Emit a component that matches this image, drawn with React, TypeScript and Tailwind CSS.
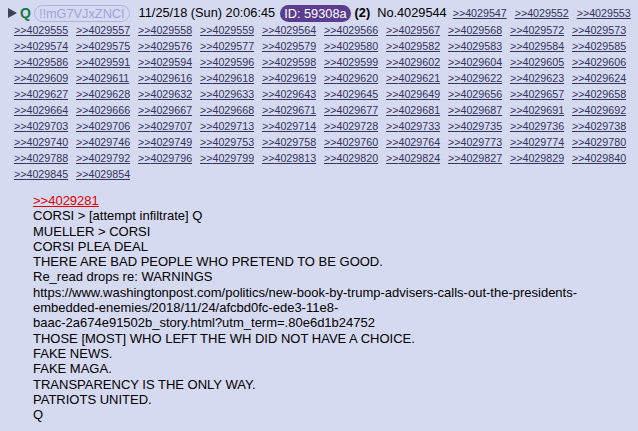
const replies = [
  4029547, 4029552, 4029553,
  4029555, 4029557, 4029558, 4029559, 4029564, 4029566, 4029567, 4029568, 4029572, 4029573,
  4029574, 4029575, 4029576, 4029577, 4029579, 4029580, 4029582, 4029583, 4029584, 4029585,
  4029586, 4029591, 4029594, 4029596, 4029598, 4029599, 4029602, 4029604, 4029605, 4029606,
  4029609, 4029611, 4029616, 4029618, 4029619, 4029620, 4029621, 4029622, 4029623, 4029624,
  4029627, 4029628, 4029632, 4029633, 4029643, 4029645, 4029649, 4029656, 4029657, 4029658,
  4029664, 4029666, 4029667, 4029668, 4029671, 4029677, 4029681, 4029687, 4029691, 4029692,
  4029703, 4029706, 4029707, 4029713, 4029714, 4029728, 4029733, 4029735, 4029736, 4029738,
  4029740, 4029746, 4029749, 4029753, 4029758, 4029760, 4029764, 4029773, 4029774, 4029780,
  4029788, 4029792, 4029796, 4029799, 4029813, 4029820, 4029824, 4029827, 4029829, 4029840,
  4029845, 4029854,
];

const body = [
  'CORSI > [attempt infiltrate] Q',
  'MUELLER > CORSI',
  'CORSI PLEA DEAL',
  'THERE ARE BAD PEOPLE WHO PRETEND TO BE GOOD.',
  'Re_read drops re: WARNINGS',
  'https://www.washingtonpost.com/politics/new-book-by-trump-advisers-calls-out-the-presidents-',
  'embedded-enemies/2018/11/24/afcbd0fc-ede3-11e8-',
  'baac-2a674e91502b_story.html?utm_term=.80e6d1b24752',
  'THOSE [MOST] WHO LEFT THE WH DID NOT HAVE A CHOICE.',
  'FAKE NEWS.',
  'FAKE MAGA.',
  'TRANSPARENCY IS THE ONLY WAY.',
  'PATRIOTS UNITED.',
  'Q',
];

function PostIntro() {
  return (
    <div className="flex items-center h-[18px] text-[12.75px] text-black whitespace-nowrap">
      <svg width="9" height="10" viewBox="0 0 9 10" className="mr-[3px]">
        <polygon points="0,0 9,5 0,10" fill="#3f3f5e" />
      </svg>
      <span className="font-bold text-[#117743] text-[14px]">Q</span>
      <span className="ml-[3px] h-[17px] leading-[15px] px-[4px] rounded-full border border-[#aeb3e2] text-[#9ea3dc]">
        !!mG7VJxZNCI
      </span>
      <span className="ml-[9px]">11/25/18 (Sun) 20:06:45</span>
      <span className="ml-[5px] h-[17px] leading-[17px] px-[4px] rounded-full bg-[#5b3d8e] text-white">ID: 59308a</span>
      <span className="ml-[4px] font-bold">(2)</span>
      <span className="ml-[7px]">No.4029544</span>
    </div>
  );
}

export default function App() {
  return (
    <div className="min-h-screen bg-[#d6daf0] font-['Liberation_Sans',Arial,sans-serif]">
      <div className="flex flex-wrap items-center pl-[8px] pt-[4px]">
        <PostIntro />
        {replies.map((n) => (
          <a
            key={n}
            href="#"
            className="ml-[6px] w-[56px] h-[16px] leading-[16px] text-[10.7px] text-[#34345c] underline whitespace-nowrap"
          >
            &gt;&gt;{n}
          </a>
        ))}
      </div>

      <div className="mt-[11px] pl-[33px] text-[13px] leading-[15.3px] text-black">
        <a href="#" className="text-[#dd0000] underline">&gt;&gt;4029281</a>
        {body.map((line, i) => (
          <div key={i}>{line}</div>
        ))}
      </div>
    </div>
  );
}
